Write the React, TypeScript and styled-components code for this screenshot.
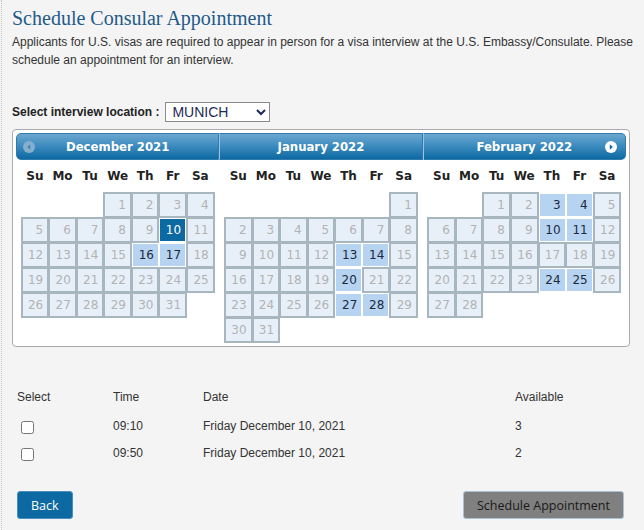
import React from "react";
import styled, { createGlobalStyle } from "styled-components";

const GlobalStyle = createGlobalStyle`
  html, body {
    margin: 0;
    padding: 0;
    background: #f4f4f4;
  }
  body {
    font-family: "Liberation Sans", Arial, sans-serif;
    color: #333;
  }
`;

type DayState = "off" | "open" | "picked";

interface Month {
  title: string;
  offset: number;
  days: number;
  open: number[];
  picked?: number;
}

const months: Month[] = [
  { title: "December 2021", offset: 3, days: 31, open: [16, 17], picked: 10 },
  { title: "January 2022", offset: 6, days: 31, open: [13, 14, 20, 27, 28] },
  { title: "February 2022", offset: 2, days: 28, open: [3, 4, 10, 11, 24, 25] },
];

const dayNames = ["Su", "Mo", "Tu", "We", "Th", "Fr", "Sa"];

const slots = [
  { time: "09:10", date: "Friday December 10, 2021", available: 3 },
  { time: "09:50", date: "Friday December 10, 2021", available: 2 },
];

const Page = styled.div`
  margin-left: 1px;
  border-left: 1px dotted #c4c4c4;
  padding: 6px 4px 0 10px;
  min-height: 524px;
`;

const Title = styled.h1`
  margin: 0;
  font-family: "Liberation Serif", "Times New Roman", serif;
  font-weight: normal;
  font-size: 20px;
  line-height: 24px;
  color: #1f5a8b;
`;

const Intro = styled.p`
  margin: 3px 0 0;
  font-size: 12px;
  line-height: 18px;
  color: #333;
`;

const LocationRow = styled.div`
  display: flex;
  align-items: center;
  gap: 6px;
  margin-top: 33px;
  height: 19px;
`;

const LocationLabel = styled.label`
  font-size: 12px;
  font-weight: bold;
  color: #222;
`;

const LocationSelect = styled.select`
  width: 105px;
  height: 20px;
  padding: 0 2px;
  font-family: "Liberation Sans", Arial, sans-serif;
  font-size: 14px;
  color: #1b2a55;
  background: #fff;
  border: 1px solid #8a8a8a;
  border-radius: 0;
`;

const Calendar = styled.div`
  margin-top: 8px;
  width: 610px;
  padding: 3px;
  background: #fff;
  border: 1px solid #ababab;
  border-radius: 4px;
  display: grid;
  grid-template-columns: repeat(3, 1fr);
`;

const Group = styled.div``;

const Header = styled.div<{ $pos: "first" | "middle" | "last" }>`
  position: relative;
  height: 25px;
  display: flex;
  align-items: center;
  justify-content: center;
  background: linear-gradient(to bottom, #6da7cf 0%, #3f8dc0 45%, #0c69a1 100%);
  border: 1px solid #2f7bb0;
  border-left-color: ${(p) => (p.$pos === "first" ? "#2f7bb0" : "#9dc2dd")};
  border-radius: ${(p) =>
    p.$pos === "first" ? "5px 0 0 5px" : p.$pos === "last" ? "0 5px 5px 0" : "0"};
  color: #fff;
  font-family: "DejaVu Sans Condensed", "DejaVu Sans", Verdana, sans-serif;
  font-weight: bold;
  font-size: 13px;
`;

const NavButton = styled.span<{ $side: "prev" | "next" }>`
  position: absolute;
  top: 7px;
  ${(p) => (p.$side === "prev" ? "left: 6px;" : "right: 8px;")}
  width: 12px;
  height: 12px;
  display: flex;
  svg {
    display: block;
  }
`;

const DayTable = styled.table`
  border-collapse: collapse;
  width: 194px;
  margin: 0 auto;
  font-family: "DejaVu Sans", Verdana, sans-serif;
  font-size: 12px;
`;

const DayName = styled.th`
  height: 32px;
  padding: 0;
  font-weight: bold;
  color: #222;
  text-align: center;
`;

const DayCell = styled.td<{ $state?: DayState }>`
  padding: 0;
  border: ${(p) => (p.$state === "off" ? "1px solid #a8b6bf" : "none")};
`;

const DayBox = styled.span<{ $state: DayState }>`
  display: block;
  height: 22px;
  line-height: 22px;
  padding-right: 4px;
  text-align: right;
  border: 1px solid
    ${(p) => (p.$state === "off" ? "#a8b6bf" : "#fff")};
  background: ${(p) =>
    p.$state === "off" ? "#e7f0f9" : p.$state === "open" ? "#b6d3f2" : "#0c69a2"};
  color: ${(p) =>
    p.$state === "off" ? "#b3b3b3" : p.$state === "open" ? "#1e2a3a" : "#fff"};
`;

const SlotTable = styled.table`
  margin-top: 43px;
  border-collapse: collapse;
  width: 620px;
  font-size: 12px;
  color: #333;
  th,
  td {
    padding: 0 0 0 5px;
    text-align: left;
    font-weight: normal;
    height: 27px;
  }
  thead th {
    height: 22px;
    vertical-align: top;
  }
`;

const SlotCheck = styled.input`
  margin: 4px 0 0 4px;
  width: 13px;
  height: 13px;
  vertical-align: middle;
`;

const Actions = styled.div`
  display: flex;
  justify-content: space-between;
  align-items: center;
  width: 607px;
  margin-top: 25px;
  padding-left: 5px;
`;

const Button = styled.button<{ $variant: "primary" | "muted" }>`
  height: 28px;
  padding: 0 13px;
  font-family: "Open Sans", "Liberation Sans", sans-serif;
  font-size: 12.5px;
  border-radius: 3px;
  border: 1px solid ${(p) => (p.$variant === "primary" ? "#4a8fc2" : "#a8c2d8")};
  background: ${(p) => (p.$variant === "primary" ? "#0c69a2" : "#808080")};
  color: ${(p) => (p.$variant === "primary" ? "#fff" : "#1a1a1a")};
  cursor: pointer;
`;

function NavIcon({ side, active }: { side: "prev" | "next"; active?: boolean }) {
  const fill = active ? "#fff" : "#86afcd";
  const arrow = active ? "#0c69a2" : "#3f86b9";
  return (
    <svg width="12" height="12" viewBox="0 0 12 12">
      <circle cx="6" cy="6" r="6" fill={fill} />
      {side === "prev" ? (
        <path d="M7.2 3.2 L4.2 6 L7.2 8.8 Z" fill={arrow} />
      ) : (
        <path d="M4.8 3.2 L7.8 6 L4.8 8.8 Z" fill={arrow} />
      )}
    </svg>
  );
}

function MonthView({ month, pos }: { month: Month; pos: "first" | "middle" | "last" }) {
  const cells: (number | null)[] = [];
  for (let i = 0; i < month.offset; i++) cells.push(null);
  for (let d = 1; d <= month.days; d++) cells.push(d);
  const weeks: (number | null)[][] = [];
  for (let i = 0; i < cells.length; i += 7) weeks.push(cells.slice(i, i + 7));

  const stateOf = (d: number): DayState =>
    d === month.picked ? "picked" : month.open.includes(d) ? "open" : "off";

  return (
    <Group>
      <Header $pos={pos}>
        {pos === "first" && (
          <NavButton $side="prev">
            <NavIcon side="prev" />
          </NavButton>
        )}
        {month.title}
        {pos === "last" && (
          <NavButton $side="next">
            <NavIcon side="next" active />
          </NavButton>
        )}
      </Header>
      <DayTable>
        <thead>
          <tr>
            {dayNames.map((n) => (
              <DayName key={n}>{n}</DayName>
            ))}
          </tr>
        </thead>
        <tbody>
          {weeks.map((week, wi) => (
            <tr key={wi}>
              {week.map((d, di) =>
                d === null ? (
                  <DayCell key={di} />
                ) : (
                  <DayCell key={di} $state={stateOf(d)}>
                    <DayBox $state={stateOf(d)}>{d}</DayBox>
                  </DayCell>
                )
              )}
            </tr>
          ))}
        </tbody>
      </DayTable>
    </Group>
  );
}

export default function App() {
  return (
    <>
      <GlobalStyle />
      <Page>
        <Title>Schedule Consular Appointment</Title>
        <Intro>
          Applicants for U.S. visas are required to appear in person for a visa interview at the
          U.S. Embassy/Consulate. Please schedule an appointment for an interview.
        </Intro>

        <LocationRow>
          <LocationLabel htmlFor="location">Select interview location :</LocationLabel>
          <LocationSelect id="location" defaultValue="MUNICH">
            <option value="MUNICH">MUNICH</option>
            <option value="FRANKFURT">FRANKFURT</option>
            <option value="BERLIN">BERLIN</option>
          </LocationSelect>
        </LocationRow>

        <Calendar>
          {months.map((m, i) => (
            <MonthView
              key={m.title}
              month={m}
              pos={i === 0 ? "first" : i === months.length - 1 ? "last" : "middle"}
            />
          ))}
        </Calendar>

        <SlotTable>
          <colgroup>
            <col style={{ width: 96 }} />
            <col style={{ width: 90 }} />
            <col style={{ width: 312 }} />
            <col />
          </colgroup>
          <thead>
            <tr>
              <th>Select</th>
              <th>Time</th>
              <th>Date</th>
              <th>Available</th>
            </tr>
          </thead>
          <tbody>
            {slots.map((s) => (
              <tr key={s.time}>
                <td>
                  <SlotCheck type="checkbox" />
                </td>
                <td>{s.time}</td>
                <td>{s.date}</td>
                <td>{s.available}</td>
              </tr>
            ))}
          </tbody>
        </SlotTable>

        <Actions>
          <Button $variant="primary">Back</Button>
          <Button $variant="muted">Schedule Appointment</Button>
        </Actions>
      </Page>
    </>
  );
}
